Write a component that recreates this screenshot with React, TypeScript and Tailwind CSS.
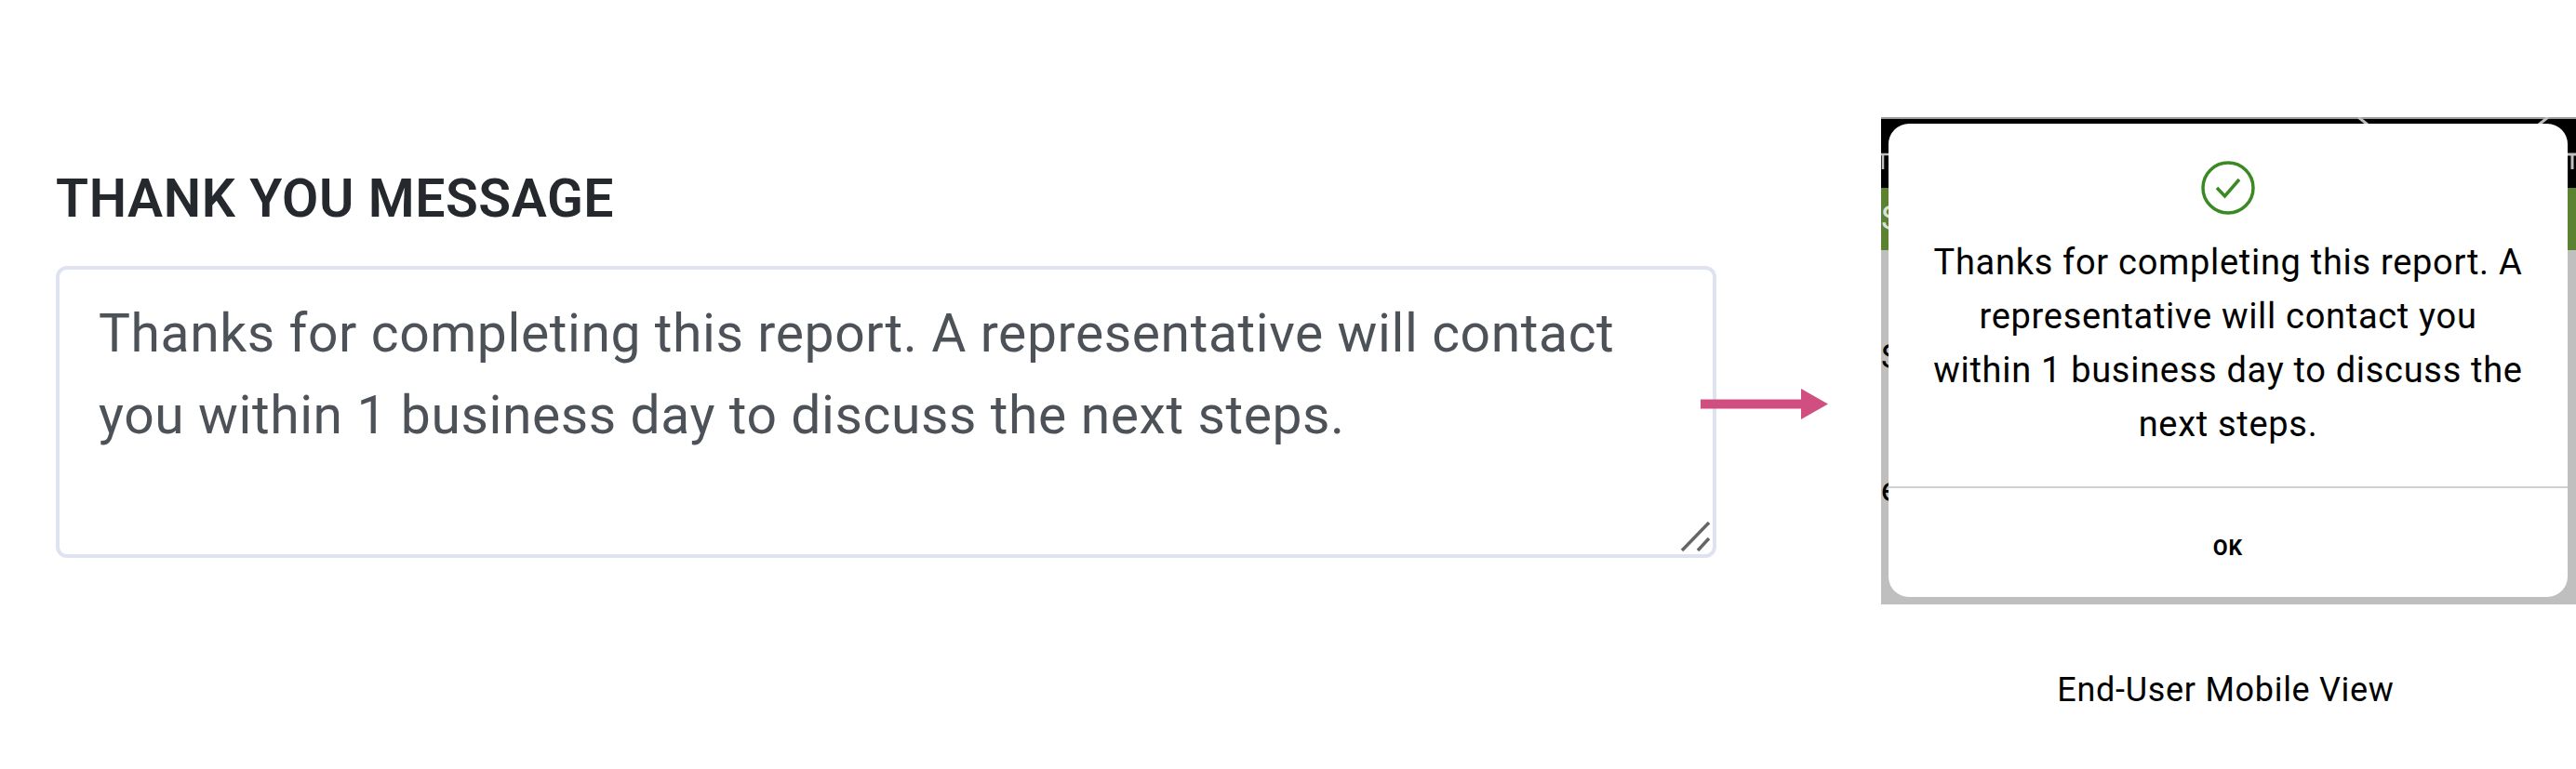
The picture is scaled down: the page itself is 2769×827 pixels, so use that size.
const message = 'Thanks for completing this report. A representative will contact you within 1 business day to discuss the next steps.'

function ResizeGrip() {
  return (
    <svg className="absolute right-[3px] bottom-[3px]" width="32" height="32" viewBox="0 0 32 32">
      <path d="M2 31 L31 1" stroke="#666" strokeWidth="3.5" />
      <path d="M19 31 L31 18" stroke="#666" strokeWidth="3.5" />
    </svg>
  )
}

function ArrowRight() {
  return (
    <svg className="relative z-10 -ml-[17px] shrink-0 self-center mb-[-41px]" width="137" height="33" viewBox="0 0 137 33">
      <path d="M0 11.5 H108 V0 L137 16.5 L108 33 V21.5 H0 Z" fill="#d14f80" />
    </svg>
  )
}

function StatusBar() {
  return (
    <svg className="block bg-black" width="747" height="76" viewBox="0 0 747 76" fill="none">
      <path d="M0 1 H747" stroke="#9a9a9a" strokeWidth="2" />
      <path d="M513 0 L523 8" stroke="#bfbfbf" strokeWidth="3" />
      <path d="M707 8 L717 0" stroke="#bfbfbf" strokeWidth="3" />
      <path d="M0 40 H8 M2 39 V56" stroke="#bfbfbf" strokeWidth="2.5" />
      <path d="M738 40 H747 M743 39 V56" stroke="#bfbfbf" strokeWidth="3" />
    </svg>
  )
}

function Dialog() {
  return (
    <div className="absolute left-[8px] top-[7px] w-[730px] h-[509px] bg-white rounded-[22px] flex flex-col items-center">
      <svg className="mt-[40px] shrink-0" width="58" height="58" viewBox="0 0 58 58" fill="none">
        <circle cx="29" cy="29" r="27" stroke="#3a8a24" strokeWidth="3.5" />
        <path d="M17 29 L25.5 38 L41 20" stroke="#3a8a24" strokeWidth="3.5" />
      </svg>
      <p className="mt-[22px] w-[640px] text-center text-[38px] leading-[58px] tracking-[0.7px] text-black">
        {message}
      </p>
      <div className="mt-[38px] w-full h-[2px] bg-[#d0d0d0]" />
      <button className="flex-1 w-full pt-[13px] text-[23px] font-bold tracking-[1px] text-black">OK</button>
    </div>
  )
}

function PhoneView() {
  return (
    <div className="relative w-[747px] h-[524px] overflow-hidden bg-[#bfbfbf]">
      <StatusBar />
      <div className="h-[67px] bg-[#5b8231] text-[36px] leading-[67px] text-[#dfdfdf]">S</div>
      {/* page text that sticks out from behind the dialog */}
      <div className="flex flex-col gap-[93px] pt-[90px] text-[36px] leading-[50px] text-black">
        <span>S</span>
        <span>e</span>
      </div>
      <Dialog />
    </div>
  )
}

export default function App() {
  return (
    <div className="w-[2769px] h-[827px] bg-white flex overflow-hidden font-['Roboto',sans-serif]">
      <div className="ml-[60px] mt-[179px] w-[1785px] shrink-0">
        <h2 className="text-[57px] leading-[70px] font-semibold tracking-[0.6px] text-[#25282d]">THANK YOU MESSAGE</h2>
        <div className="relative mt-[37px] h-[314px] border-4 border-[#dfe2f0] rounded-[12px] pl-[42px] pr-[60px] pt-[25px] text-[57px] leading-[88px] tracking-[0.6px] text-[#4d5259]">
          {message}
          <ResizeGrip />
        </div>
      </div>
      <ArrowRight />
      <div className="ml-[57px] mt-[126px] flex flex-col items-center">
        <PhoneView />
        <p className="mt-[70px] -ml-[6px] text-[36px] leading-[44px] tracking-[0.7px] text-black">End-User Mobile View</p>
      </div>
    </div>
  )
}
